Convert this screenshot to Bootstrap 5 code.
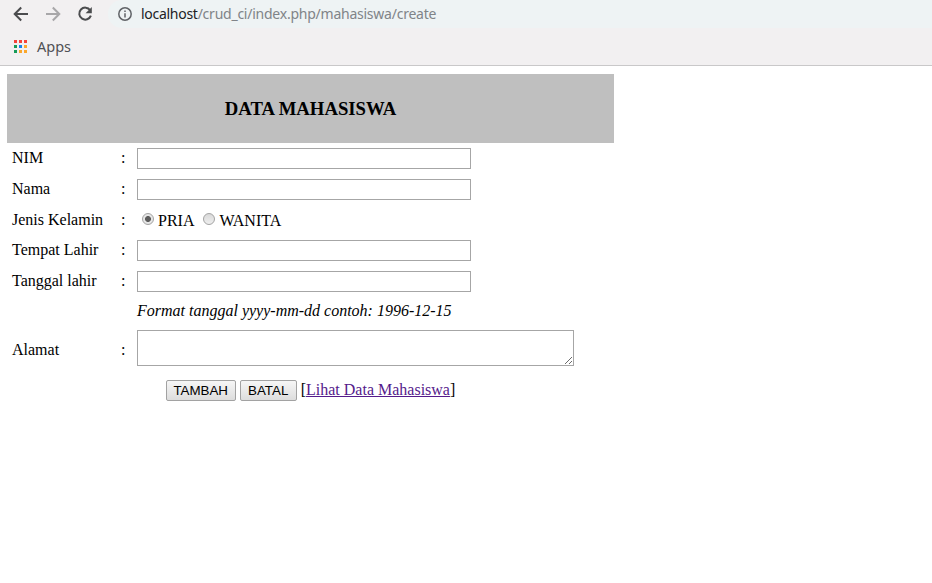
<!DOCTYPE html>
<html lang="id">
<head>
<meta charset="utf-8">
<meta name="viewport" content="width=device-width, initial-scale=1">
<title>Data Mahasiswa</title>
<link href="https://cdn.jsdelivr.net/npm/bootstrap@5.3.0/dist/css/bootstrap.min.css" rel="stylesheet">
<style>
body{font-family:"Liberation Serif",serif;font-size:16px;line-height:18px;color:#000;background:#fff}
.chrome{height:66px;background:#f2f0f1;border-bottom:1px solid #c9c8c9;font-family:"Noto Sans",sans-serif}
.toolbar{height:28px;padding-left:13px}
.toolbar svg{display:block;flex:none}
.omnibox{height:28px;background:#eef3f4;border-radius:14px 0 0 14px;padding-left:10px;margin-left:15px;color:#808488;font-size:14px;white-space:nowrap}
.url{margin-left:9px}
.host{color:#202124;letter-spacing:-.28px}
.path{letter-spacing:-.24px}
.bookmarks{height:37px;padding-left:14px;color:#505155;font-size:14.5px}
.apps-text{margin-left:10px;padding-bottom:2px}
.sheet{width:607px;margin:8px 0 0 7px}
.title-bar{height:69px;background:#bfbfbf;font-size:18.72px;font-weight:700}
.line{height:31px;padding-left:5px}
.line-radio{height:30px}
.line-hint{height:28px}
.line-area{height:46px}
.lbl{width:109px}
.colon{width:16px}
.line .lbl,.line .colon{padding-bottom:2px}
.line-radio .lbl,.line-radio .colon{padding-bottom:0}
.line-area .lbl,.line-area .colon{padding:4px 0 0}
.field{width:334px;height:21px;border:1px solid #a6a6a6;padding:1px;font:13.33px "Liberation Sans",sans-serif}
.area{width:437px;height:36px;border:1px solid #a6a6a6;padding:2px;resize:none;display:block;font:13.33px "Liberation Mono",monospace}
.grip{right:1px;bottom:1px}
.choices{margin-left:5px;padding-bottom:2px}
.choices label{padding-top:4px;margin-left:4px}
.dot{appearance:none;width:12px;height:12px;margin:0;border:1px solid #a3a3a3;border-radius:50%;background:linear-gradient(#d9d9d9,#eeeeee)}
.dot:checked{background:radial-gradient(circle,#5c5c5c 0 2.6px,#e6e6e6 3.3px)}
.dot-second{margin-left:9px}
.actions{padding-top:9px}
.push{height:21px;border:1px solid #a2a2a2;border-radius:2px;background:linear-gradient(#f6f6f6,#dddddd);padding:0;color:#000;font:13.33px/19px "Liberation Sans",sans-serif}
.push-add{width:70px}
.push-cancel{width:57px}
.list-link{padding-bottom:2px}
.visited{color:#551a8b}
.hint{font-size:16px}
</style>
<script src="https://cdn.jsdelivr.net/npm/bootstrap@5.3.0/dist/js/bootstrap.bundle.min.js"></script>
</head>
<body>
<header class="chrome">
  <div class="toolbar d-flex align-items-center">
    <svg width="16" height="16" viewBox="0 0 16 16" fill="none" stroke="#4b4c4e" stroke-width="2"><path d="M15 8H2M8.2 1.5L1.7 8l6.5 6.5"/></svg>
    <svg class="ms-3" width="16" height="16" viewBox="0 0 16 16" fill="none" stroke="#a8a7a9" stroke-width="2"><path d="M1 8h13M7.8 1.5L14.3 8l-6.5 6.5"/></svg>
    <svg class="ms-3" width="16" height="16" viewBox="0 0 16 16" fill="none"><path d="M13.2 4.2A6 6 0 1 0 13.9 9.7" stroke="#4b4c4e" stroke-width="2"/><path d="M14.8 1v6.2H8.6z" fill="#4b4c4e"/></svg>
    <div class="omnibox d-flex align-items-center flex-grow-1">
      <svg width="14" height="14" viewBox="0 0 14 14" fill="none" stroke="#606367" stroke-width="1.5"><circle cx="7" cy="7" r="6.2"/><path d="M7 6.2v4.3M7 3.5v1.5"/></svg>
      <div class="url"><span class="host">localhost</span><span class="path">/crud_ci/index.php/mahasiswa/create</span></div>
    </div>
  </div>
  <div class="bookmarks d-flex align-items-center">
    <svg width="13" height="13" viewBox="0 0 13 13"><path fill="#f4433a" d="M0 0h3v3H0zM5 0h3v3H5zM10 0h3v3h-3z"/><path fill="#169b58" d="M0 5h3v3H0zM0 10h3v3H0z"/><path fill="#1683ec" d="M5 5h3v3H5z"/><path fill="#fba72c" d="M10 5h3v3h-3zM5 10h3v3H5zM10 10h3v3h-3z"/></svg>
    <span class="apps-text">Apps</span>
  </div>
</header>
<main class="sheet">
  <div class="title-bar d-flex align-items-center justify-content-center">DATA MAHASISWA</div>
  <form>
    <div class="line d-flex align-items-center"><label class="lbl" for="nim">NIM</label><span class="colon">:</span><input class="field" id="nim" type="text"></div>
    <div class="line d-flex align-items-center"><label class="lbl" for="nama">Nama</label><span class="colon">:</span><input class="field" id="nama" type="text"></div>
    <div class="line line-radio d-flex align-items-center"><span class="lbl">Jenis Kelamin</span><span class="colon">:</span>
      <div class="choices d-flex align-items-center">
        <input class="dot" id="pria" type="radio" name="jk" checked><label for="pria">PRIA</label>
        <input class="dot dot-second" id="wanita" type="radio" name="jk"><label for="wanita">WANITA</label>
      </div>
    </div>
    <div class="line d-flex align-items-center"><label class="lbl" for="tempat">Tempat Lahir</label><span class="colon">:</span><input class="field" id="tempat" type="text"></div>
    <div class="line d-flex align-items-center"><label class="lbl" for="tanggal">Tanggal lahir</label><span class="colon">:</span><input class="field" id="tanggal" type="text"></div>
    <div class="line line-hint d-flex align-items-center"><span class="lbl"></span><span class="colon"></span><em class="hint">Format tanggal yyyy-mm-dd contoh: 1996-12-15</em></div>
    <div class="line line-area d-flex align-items-center"><label class="lbl" for="alamat">Alamat</label><span class="colon">:</span>
      <div class="position-relative"><textarea class="area" id="alamat"></textarea>
        <svg class="grip position-absolute" width="9" height="9" viewBox="0 0 9 9" stroke="#6b6b6b" stroke-width="1"><path d="M1 8L8 1M5 8l3-3"/></svg>
      </div>
    </div>
    <div class="actions d-flex align-items-center justify-content-center gap-1">
      <button class="push push-add" type="button">TAMBAH</button>
      <button class="push push-cancel" type="button">BATAL</button>
      <span class="list-link">[<a class="visited" href="#">Lihat Data Mahasiswa</a>]</span>
    </div>
  </form>
</main>
</body>
</html>
